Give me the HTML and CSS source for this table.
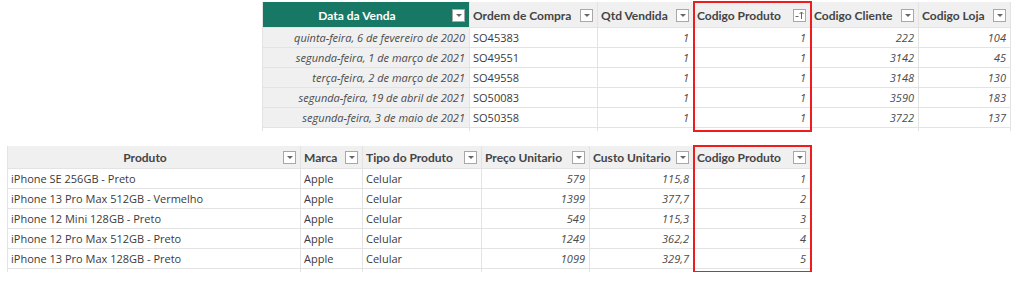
FILE: index.html
```html
<!DOCTYPE html>
<html lang="pt-BR">

<head>
    <meta charset="UTF-8">
    <title>Vendas e Produtos</title>
    <link rel="stylesheet" href="styles.css">
</head>

<body>
    <!-- tabela fVendas -->
    <div class="grid sales">
        <div class="col date w207">
            <div class="head center"><span class="label">Data da Venda</span><span class="drop"></span></div>
            <div class="cell num">quinta-feira, 6 de fevereiro de 2020</div>
            <div class="cell num">segunda-feira, 1 de março de 2021</div>
            <div class="cell num">terça-feira, 2 de março de 2021</div>
            <div class="cell num">segunda-feira, 19 de abril de 2021</div>
            <div class="cell num">segunda-feira, 3 de maio de 2021</div>
            <div class="tail"></div>
        </div>
        <div class="col w128">
            <div class="head"><span class="label">Ordem de Compra</span><span class="drop"></span></div>
            <div class="cell">SO45383</div>
            <div class="cell">SO49551</div>
            <div class="cell">SO49558</div>
            <div class="cell">SO50083</div>
            <div class="cell">SO50358</div>
            <div class="tail"></div>
        </div>
        <div class="col w96">
            <div class="head"><span class="label">Qtd Vendida</span><span class="drop"></span></div>
            <div class="cell num">1</div>
            <div class="cell num">1</div>
            <div class="cell num">1</div>
            <div class="cell num">1</div>
            <div class="cell num">1</div>
            <div class="tail"></div>
        </div>
        <div class="col mark w117">
            <div class="head"><span class="label">Codigo Produto</span>
                <span class="drop sorted">
                    <svg width="11" height="11" viewBox="0 0 11 11">
                        <path d="M1.5 6.5h3" stroke="#666" stroke-width="1" fill="none" />
                        <path d="M7.5 2v7M5.5 4l2-2 2 2" stroke="#666" stroke-width="1" fill="none" />
                    </svg>
                </span>
            </div>
            <div class="cell num">1</div>
            <div class="cell num">1</div>
            <div class="cell num">1</div>
            <div class="cell num">1</div>
            <div class="cell num">1</div>
            <div class="tail"></div>
        </div>
        <div class="col w108">
            <div class="head"><span class="label">Codigo Cliente</span><span class="drop"></span></div>
            <div class="cell num">222</div>
            <div class="cell num">3142</div>
            <div class="cell num">3148</div>
            <div class="cell num">3590</div>
            <div class="cell num">3722</div>
            <div class="tail"></div>
        </div>
        <div class="col w92">
            <div class="head"><span class="label">Codigo Loja</span><span class="drop"></span></div>
            <div class="cell num">104</div>
            <div class="cell num">45</div>
            <div class="cell num">130</div>
            <div class="cell num">183</div>
            <div class="cell num">137</div>
            <div class="tail"></div>
        </div>
    </div>

    <!-- tabela dProdutos -->
    <div class="grid products">
        <div class="col w293">
            <div class="head center"><span class="label">Produto</span><span class="drop"></span></div>
            <div class="cell">iPhone SE 256GB - Preto</div>
            <div class="cell">iPhone 13 Pro Max 512GB - Vermelho</div>
            <div class="cell">iPhone 12 Mini 128GB - Preto</div>
            <div class="cell">iPhone 12 Pro Max 512GB - Preto</div>
            <div class="cell">iPhone 13 Pro Max 128GB - Preto</div>
            <div class="tail"></div>
        </div>
        <div class="col w62">
            <div class="head"><span class="label">Marca</span><span class="drop"></span></div>
            <div class="cell">Apple</div>
            <div class="cell">Apple</div>
            <div class="cell">Apple</div>
            <div class="cell">Apple</div>
            <div class="cell">Apple</div>
            <div class="tail"></div>
        </div>
        <div class="col w119">
            <div class="head"><span class="label">Tipo do Produto</span><span class="drop"></span></div>
            <div class="cell">Celular</div>
            <div class="cell">Celular</div>
            <div class="cell">Celular</div>
            <div class="cell">Celular</div>
            <div class="cell">Celular</div>
            <div class="tail"></div>
        </div>
        <div class="col w108">
            <div class="head"><span class="label">Preço Unitario</span><span class="drop"></span></div>
            <div class="cell num">579</div>
            <div class="cell num">1399</div>
            <div class="cell num">549</div>
            <div class="cell num">1249</div>
            <div class="cell num">1099</div>
            <div class="tail"></div>
        </div>
        <div class="col w104">
            <div class="head"><span class="label">Custo Unitario</span><span class="drop"></span></div>
            <div class="cell num">115,8</div>
            <div class="cell num">377,7</div>
            <div class="cell num">115,3</div>
            <div class="cell num">362,2</div>
            <div class="cell num">329,7</div>
            <div class="tail"></div>
        </div>
        <div class="col mark w117">
            <div class="head"><span class="label">Codigo Produto</span><span class="drop"></span></div>
            <div class="cell num">1</div>
            <div class="cell num">2</div>
            <div class="cell num">3</div>
            <div class="cell num">4</div>
            <div class="cell num">5</div>
            <div class="tail"></div>
        </div>
    </div>
</body>

</html>
```

FILE: styles.css
```css
body {
    margin: 0;
    background: #fff;
    font-family: "Open Sans", "Noto Sans", sans-serif;
    font-size: 11px;
    color: #3a3a3a;
}

.grid {
    display: flex;
    width: max-content;
    border-left: 1px solid #e3e3e3;
}

.sales {
    margin: 2px 0 0 262px;
}

.products {
    margin: 15px 0 0 7px;
}

.col {
    display: flex;
    flex-direction: column;
    border-right: 1px solid #e3e3e3;
}

.w207 { width: 206px; }
.w128 { width: 127px; }
.w96 { width: 95px; }
.w117 { width: 116px; }
.w108 { width: 107px; }
.w92 { width: 91px; }
.w293 { width: 292px; }
.w62 { width: 61px; }
.w119 { width: 118px; }
.w104 { width: 103px; }

/* coluna destacada */
.mark {
    outline: 2px solid #ee1c1c;
    outline-offset: -1px;
    position: relative;
    z-index: 1;
}

.head {
    height: 26px;
    display: flex;
    align-items: center;
    gap: 4px;
    padding: 1px 4px 0 3px;
    background: #f0f0f0;
    border-bottom: 1px solid #e3e3e3;
    font-family: Lato, "Open Sans", sans-serif;
    font-weight: 700;
    font-size: 12px;
    color: #444;
    white-space: nowrap;
    box-sizing: border-box;
}

.products .head {
    height: 23px;
}

.head .label {
    flex: 1;
}

.head.center .label {
    text-align: center;
}

.date .head {
    background: #177965;
    color: #fff;
}

.date .cell {
    background: #f0f0f0;
}

/* botao de filtro do cabecalho */
.drop {
    width: 13px;
    height: 13px;
    box-sizing: border-box;
    border: 1px solid #a8a8a8;
    background: #fff;
    display: flex;
    align-items: center;
    justify-content: center;
    flex-shrink: 0;
}

.drop::after {
    content: "";
    border-left: 3px solid transparent;
    border-right: 3px solid transparent;
    border-top: 3px solid #666;
}

.drop.sorted::after {
    display: none;
}

.cell {
    height: 20px;
    line-height: 19px;
    padding: 0 4px 0 3px;
    border-bottom: 1px solid #e3e3e3;
    box-sizing: border-box;
    white-space: nowrap;
    overflow: hidden;
}

.num {
    text-align: right;
    font-style: italic;
    color: #4a4a4a;
}

.tail {
    height: 3px;
}
```
